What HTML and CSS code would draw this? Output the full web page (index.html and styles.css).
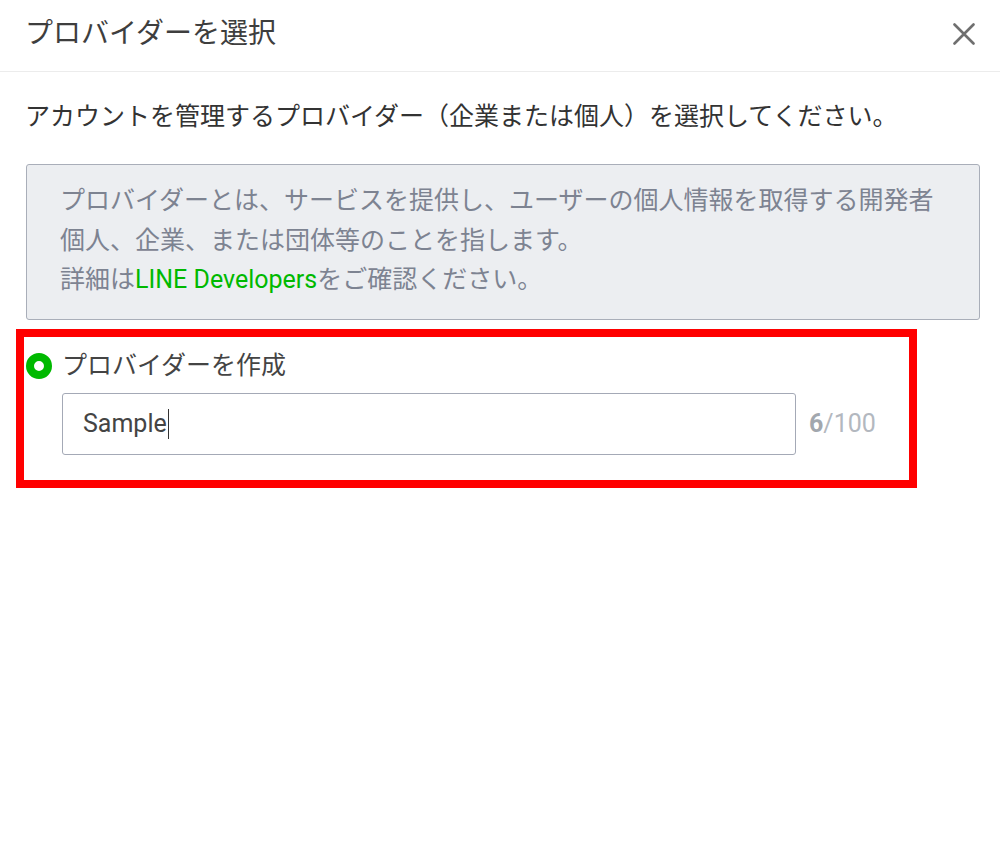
FILE: index.html
```html
<!DOCTYPE html>
<html lang="ja">
<head>
<meta charset="utf-8">
<title>プロバイダーを選択</title>
<link rel="stylesheet" href="styles.css">
</head>
<body>
<div class="modal">
  <header class="modal-header">
    <h1 class="modal-title">プロバイダーを選択</h1>
    <button class="close-btn" aria-label="閉じる">
      <svg width="22" height="22" viewBox="0 0 22 22"><path d="M1.5 1.5 L20.5 20.5 M20.5 1.5 L1.5 20.5" stroke="#6f6f6f" stroke-width="2.6" stroke-linecap="round" fill="none"/></svg>
    </button>
  </header>
  <div class="modal-body">
    <p class="lead">アカウントを管理するプロバイダー（企業または個人）を選択してください。</p>
    <div class="info-box">
      プロバイダーとは、サービスを提供し、ユーザーの個人情報を取得する開発者<br>
      個人、企業、または団体等のことを指します。<br>
      詳細は<a class="link" href="#">LINE Developers</a>をご確認ください。
    </div>
    <div class="highlight">
      <label class="radio-row">
        <span class="radio"></span>
        <span class="radio-label">プロバイダーを作成</span>
      </label>
      <div class="input-row">
        <div class="text-input"><span class="value">Sample</span><span class="caret"></span></div>
        <div class="counter"><b>6</b>/100</div>
      </div>
    </div>
  </div>
</div>
</body>
</html>
```

FILE: styles.css
```css
* { box-sizing: border-box; }
html, body { margin: 0; padding: 0; background: #fff; }
body {
  font-family: Roboto, "Noto Sans CJK JP", sans-serif;
  color: #333;
  width: 1000px;
  height: 859px;
  overflow: hidden;
}
.modal-header {
  height: 72px;
  border-bottom: 1px solid #ececec;
  display: flex;
  align-items: center;
  justify-content: space-between;
  padding: 0 25px 4px 25px;
}
.modal-title {
  margin: 0;
  font-size: 28px;
  font-weight: 400;
  color: #3e3e3e;
  line-height: 40px;
}
.close-btn {
  border: 0;
  background: none;
  padding: 0;
  width: 22px;
  height: 22px;
  display: flex;
  margin-right: 0;
}
.modal-body {
  padding: 0 20px 0 16px;
}
.lead {
  margin: 27px 0 0 9px;
  font-size: 25px;
  line-height: 36px;
  color: #333;
}
.info-box {
  margin: 29px 0 0 10px;
  width: 954px;
  background: #eceef1;
  border: 1px solid #a9aeb9;
  border-radius: 3px;
  padding: 16px 20px 19px 33px;
  font-size: 25px;
  line-height: 39.5px;
  color: #7d8391;
}
.link {
  color: #00b900;
  text-decoration: none;
}
.highlight {
  margin-top: 9px;
  width: 901px;
  border: 8px solid #ff0000;
  padding: 11px 0 25px 2px;
}
.radio-row {
  display: flex;
  align-items: center;
  height: 36px;
}
.radio {
  width: 26px;
  height: 26px;
  border-radius: 50%;
  border: 8px solid #00b900;
  background: #fff;
  flex: none;
}
.radio-label {
  margin-left: 10px;
  font-size: 25px;
  color: #444;
  line-height: 36px;
}
.input-row {
  display: flex;
  align-items: center;
  margin-top: 9px;
  padding-left: 36px;
}
.text-input {
  width: 734px;
  height: 62px;
  border: 1px solid #a4a9b6;
  border-radius: 3px;
  background: #fff;
  display: flex;
  align-items: center;
  padding-left: 20px;
  font-size: 25px;
  color: #444;
}
.caret {
  width: 1.5px;
  height: 30px;
  background: #333;
  margin-left: 1px;
}
.counter {
  margin-left: 13px;
  font-size: 25px;
  color: #b3b8bf;
}
.counter b {
  color: #a2a7ae;
  font-weight: 700;
}
```
